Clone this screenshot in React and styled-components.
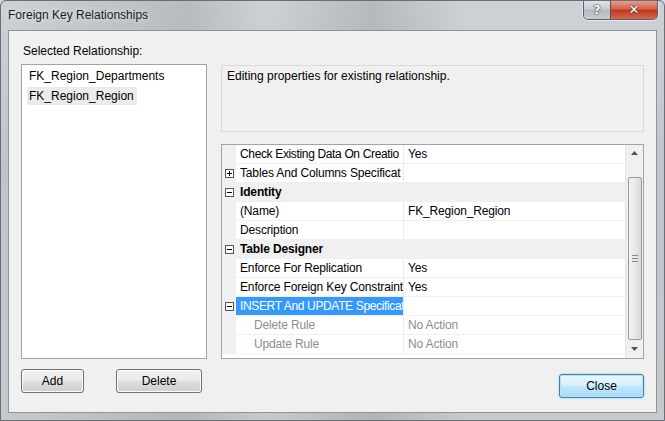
import React from "react";
import styled, { createGlobalStyle } from "styled-components";

const GlobalStyle = createGlobalStyle`
  html, body {
    margin: 0;
    padding: 0;
    background: #d6dade;
  }
  body {
    font-family: "Liberation Sans", Arial, sans-serif;
    font-size: 12px;
    color: #000;
  }
`;

const Window = styled.div`
  width: 665px;
  height: 421px;
  box-sizing: border-box;
  display: flex;
  flex-direction: column;
  border: 1px solid #6b6f74;
  border-radius: 6px 6px 0 0;
  background:
    linear-gradient(90deg, rgba(255,255,255,0) 0%, rgba(120,125,130,0.25) 28%, rgba(255,255,255,0) 40%, rgba(110,115,120,0.25) 56%, rgba(255,255,255,0) 70%),
    linear-gradient(180deg, #cdd2d7 0%, #bfc5cb 40%, #c5cacf 100%);
  overflow: hidden;
`;

const TitleBar = styled.div`
  height: 29px;
  display: flex;
  align-items: flex-start;
  justify-content: space-between;
  padding-left: 7px;
`;

const Title = styled.div`
  margin-top: 7px;
  font-size: 12px;
  color: #1b1b1b;
  text-shadow: 0 0 6px rgba(255,255,255,0.9);
`;

const CaptionGroup = styled.div`
  display: flex;
  margin-right: 6px;
  margin-top: -1px;
  border: 1px solid #5b5f66;
  border-top: none;
  border-radius: 0 0 5px 5px;
  overflow: hidden;
  box-shadow: 0 0 0 1px rgba(255,255,255,0.5);
`;

const CaptionButton = styled.div`
  width: ${({ $wide }) => ($wide ? "46px" : "26px")};
  height: 19px;
  display: flex;
  align-items: center;
  justify-content: center;
  color: #fff;
  font-weight: bold;
  font-size: ${({ $wide }) => ($wide ? "13px" : "12px")};
  font-family: "DejaVu Sans", sans-serif;
  text-shadow: 0 0 2px #333, 0 0 1px #222;
  background: ${({ $wide }) =>
    $wide
      ? "linear-gradient(180deg, #e8a497 0%, #d6654f 45%, #c2381e 55%, #d46a4b 100%)"
      : "linear-gradient(180deg, #e3e6ea 0%, #c9ced4 45%, #b3b9c0 55%, #c6ccd2 100%)"};
  border-left: ${({ $wide }) => ($wide ? "1px solid #6a4a44" : "none")};
`;

const Client = styled.div`
  flex: 1;
  margin: 0 7px 7px 7px;
  border: 1px solid #8e949a;
  background: #f0f0f0;
  display: flex;
  flex-direction: column;
  padding: 12px 12px 0 12px;
`;

const SectionLabel = styled.div`
  height: 21px;
  line-height: 16px;
  padding-left: 2px;
`;

const Body = styled.div`
  display: flex;
  gap: 14px;
  height: 295px;
`;

const ListBox = styled.div`
  width: 186px;
  box-sizing: border-box;
  background: #fff;
  border: 1px solid #a0a4a9;
  padding: 2px 5px;
`;

const ListItem = styled.div`
  display: inline-block;
  height: 18px;
  line-height: 18px;
  padding: 0 3px 0 2px;
  background: ${({ $selected }) => ($selected ? "#ebebeb" : "transparent")};
  margin-bottom: 2px;
`;

const RightColumn = styled.div`
  flex: 1;
  display: flex;
  flex-direction: column;
  gap: 12px;
`;

const Description = styled.div`
  height: 67px;
  margin-top: 1px;
  box-sizing: border-box;
  border: 1px solid #d9d9d9;
  background: #f0f0f0;
  padding: 3px 5px;
`;

const Grid = styled.div`
  flex: 1;
  box-sizing: border-box;
  border: 1px solid #a0a4a9;
  background: #fff;
  display: flex;
  letter-spacing: -0.15px;
`;

const Rows = styled.div`
  flex: 1;
  display: flex;
  flex-direction: column;
`;

const Row = styled.div`
  height: 19px;
  display: grid;
  grid-template-columns: 14px 167px 1fr;
  background: ${({ $category }) => ($category ? "#f0f0f0" : "#fff")};
`;

const Gutter = styled.div`
  background: #f0f0f0;
  display: flex;
  align-items: center;
  justify-content: center;
`;

const NameCell = styled.div`
  line-height: 18px;
  padding-left: ${({ $indent }) => ($indent ? "18px" : "4px")};
  white-space: nowrap;
  overflow: hidden;
  letter-spacing: ${({ $tight }) => ($tight ? "-0.35px" : "-0.15px")};
  font-weight: ${({ $category }) => ($category ? "bold" : "normal")};
  color: ${({ $selected, $disabled }) =>
    $selected ? "#fff" : $disabled ? "#8d8d8d" : "#000"};
  background: ${({ $selected }) => ($selected ? "#3399ff" : "transparent")};
  border-bottom: 1px solid #f0f0f0;
`;

const ValueCell = styled.div`
  line-height: 18px;
  padding-left: 4px;
  white-space: nowrap;
  overflow: hidden;
  color: ${({ $disabled }) => ($disabled ? "#8d8d8d" : "#000")};
  border-left: 1px solid #ececec;
  border-bottom: 1px solid #f0f0f0;
`;

const ExpandBox = styled.div`
  width: 7px;
  height: 7px;
  border: 1px solid #555;
  background: #fff;
  position: relative;
  &::before {
    content: "";
    position: absolute;
    left: 1px;
    right: 1px;
    top: 3px;
    height: 1px;
    background: #000;
  }
  &::after {
    content: "";
    display: ${({ $collapsed }) => ($collapsed ? "block" : "none")};
    position: absolute;
    top: 1px;
    bottom: 1px;
    left: 3px;
    width: 1px;
    background: #000;
  }
`;

const ScrollBar = styled.div`
  width: 17px;
  background: #f0f0f0;
  border-left: 1px solid #e6e6e6;
  display: flex;
  flex-direction: column;
  align-items: center;
`;

const Arrow = styled.div`
  height: 16px;
  width: 17px;
  display: flex;
  align-items: center;
  justify-content: center;
`;

const Thumb = styled.div`
  width: 14px;
  box-sizing: border-box;
  height: 163px;
  margin: 16px 0 1px 0;
  border: 1px solid #9a9a9a;
  border-radius: 2px;
  background: linear-gradient(90deg, #f3f3f3 0%, #e9e9e9 50%, #d9d9d9 100%);
  display: flex;
  align-items: center;
  justify-content: center;
`;

const Grip = styled.div`
  width: 6px;
  height: 5px;
  border-top: 1px solid #8a8a8a;
  border-bottom: 1px solid #8a8a8a;
  position: relative;
  &::after {
    content: "";
    position: absolute;
    left: 0;
    right: 0;
    top: 2px;
    height: 1px;
    background: #8a8a8a;
  }
`;

const Spacer = styled.div`
  flex: 1;
`;

const Footer = styled.div`
  display: flex;
  align-items: flex-start;
  padding-top: 10px;
`;

const Button = styled.button`
  font-family: inherit;
  font-size: 12px;
  color: #000;
  width: ${({ $w }) => $w}px;
  height: 24px;
  margin-right: ${({ $mr }) => $mr || 0}px;
  margin-top: ${({ $mt }) => $mt || 0}px;
  border: 1px solid ${({ $default }) => ($default ? "#3c7fb1" : "#707070")};
  border-radius: 3px;
  padding: 0;
  background: ${({ $default }) =>
    $default
      ? "linear-gradient(180deg, #eaf6fd 0%, #d9f0fc 45%, #bee6fd 55%, #a7d9f5 100%)"
      : "linear-gradient(180deg, #f2f2f2 0%, #ebebeb 45%, #dddddd 55%, #cfcfcf 100%)"};
  box-shadow: ${({ $default }) =>
    $default ? "inset 0 0 0 1px #b6e2fa, 0 0 2px #7fc3ec" : "inset 0 0 0 1px #fcfcfc"};
`;

const ArrowUp = () => (
  <svg width="7" height="4" viewBox="0 0 7 4">
    <path d="M0 4 L3.5 0 L7 4 Z" fill="#555" />
  </svg>
);

const ArrowDown = () => (
  <svg width="7" height="4" viewBox="0 0 7 4">
    <path d="M0 0 L3.5 4 L7 0 Z" fill="#555" />
  </svg>
);

// names are shown as the grid clips them
const properties = [
  { name: "Check Existing Data On Creatio", value: "Yes", tight: true },
  { name: "Tables And Columns Specificat", value: "", collapsed: true },
  { name: "Identity", category: true, expanded: true },
  { name: "(Name)", value: "FK_Region_Region" },
  { name: "Description", value: "" },
  { name: "Table Designer", category: true, expanded: true },
  { name: "Enforce For Replication", value: "Yes" },
  { name: "Enforce Foreign Key Constraint", value: "Yes" },
  { name: "INSERT And UPDATE Specificat", value: "", expanded: true, selected: true, tight: true },
  { name: "Delete Rule", value: "No Action", indent: true, disabled: true },
  { name: "Update Rule", value: "No Action", indent: true, disabled: true },
];

const App = () => {
  return (
    <>
      <GlobalStyle />
      <Window>
        <TitleBar>
          <Title>Foreign Key Relationships</Title>
          <CaptionGroup>
            <CaptionButton>?</CaptionButton>
            <CaptionButton $wide>✕</CaptionButton>
          </CaptionGroup>
        </TitleBar>
        <Client>
          <SectionLabel>Selected Relationship:</SectionLabel>
          <Body>
            <ListBox>
              <ListItem>FK_Region_Departments</ListItem>
              <br />
              <ListItem $selected>FK_Region_Region</ListItem>
            </ListBox>
            <RightColumn>
              <Description>Editing properties for existing relationship.</Description>
              <Grid>
                <Rows>
                  {properties.map((p) => (
                    <Row key={p.name} $category={p.category}>
                      <Gutter>
                        {(p.collapsed || p.expanded) && <ExpandBox $collapsed={p.collapsed} />}
                      </Gutter>
                      {p.category ? (
                        <NameCell $category style={{ gridColumn: "2 / 4" }}>
                          {p.name}
                        </NameCell>
                      ) : (
                        <>
                          <NameCell
                            $indent={p.indent}
                            $selected={p.selected}
                            $disabled={p.disabled}
                            $tight={p.tight}
                          >
                            {p.name}
                          </NameCell>
                          <ValueCell $disabled={p.disabled}>{p.value}</ValueCell>
                        </>
                      )}
                    </Row>
                  ))}
                </Rows>
                <ScrollBar>
                  <Arrow>
                    <ArrowUp />
                  </Arrow>
                  <Thumb>
                    <Grip />
                  </Thumb>
                  <Arrow>
                    <ArrowDown />
                  </Arrow>
                </ScrollBar>
              </Grid>
            </RightColumn>
          </Body>
          <Footer>
            <Button $w={63} $mr={32}>Add</Button>
            <Button $w={86}>Delete</Button>
            <Spacer />
            <Button $w={85} $mt={5} $default>
              Close
            </Button>
          </Footer>
        </Client>
      </Window>
    </>
  );
};

export default App;
